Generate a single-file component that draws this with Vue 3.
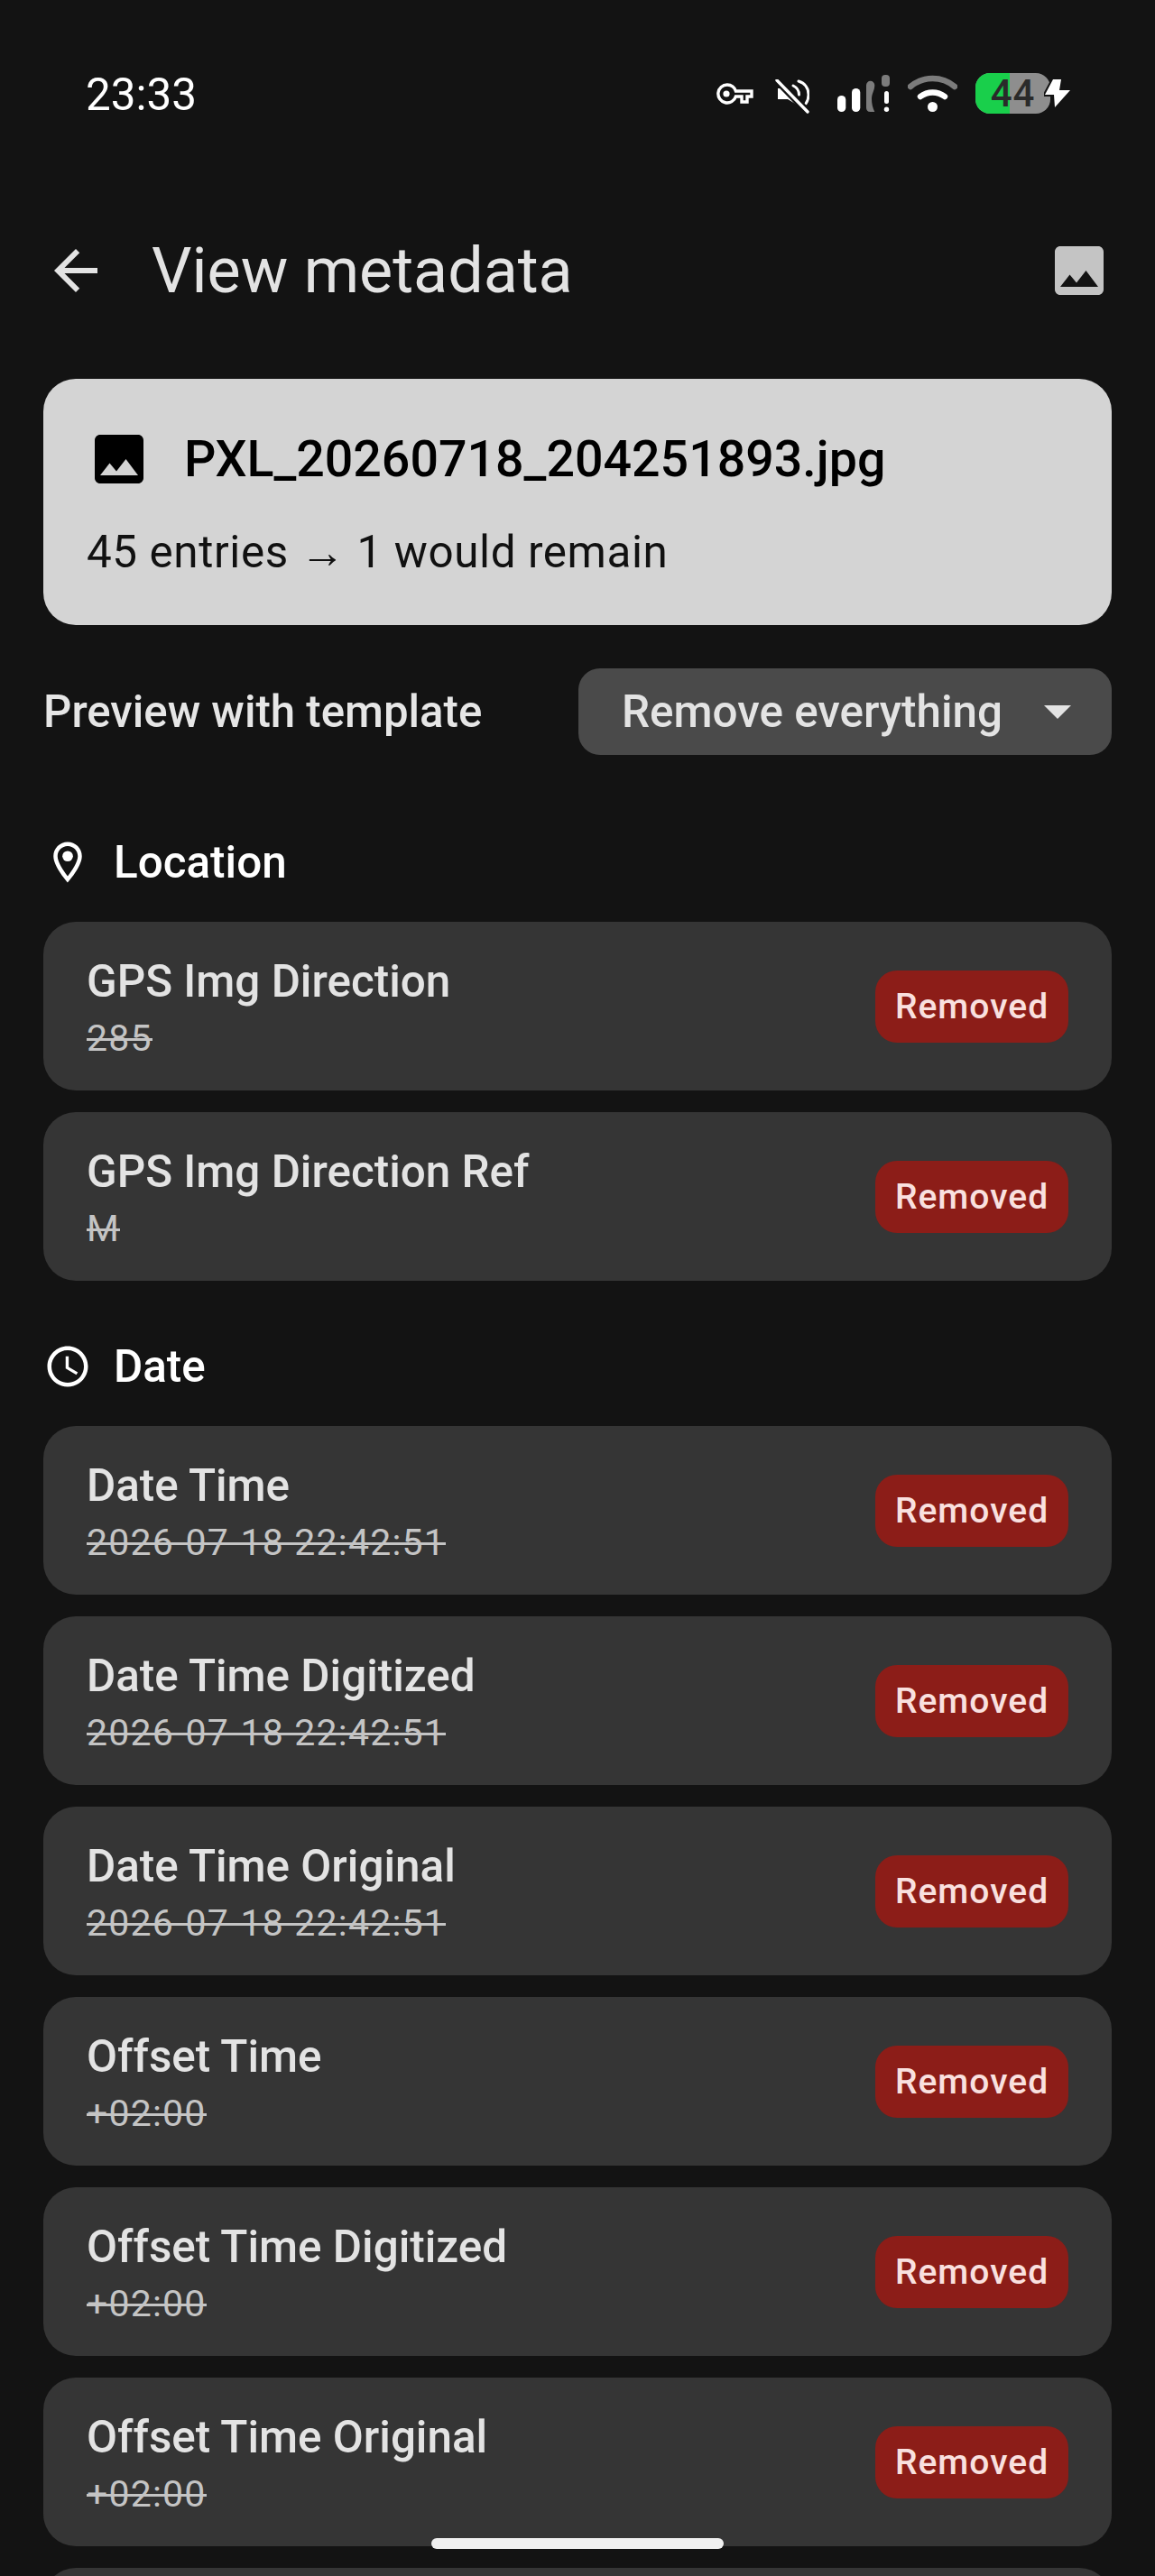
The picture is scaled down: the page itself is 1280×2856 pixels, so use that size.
<script setup>
const sections = [
  { title: 'Location', icon: 'pin', rows: [
    ['GPS Img Direction', '285'],
    ['GPS Img Direction Ref', 'M'],
  ] },
  { title: 'Date', icon: 'clock', rows: [
    ['Date Time', '2026-07-18 22:42:51'],
    ['Date Time Digitized', '2026-07-18 22:42:51'],
    ['Date Time Original', '2026-07-18 22:42:51'],
    ['Offset Time', '+02:00'],
    ['Offset Time Digitized', '+02:00'],
    ['Offset Time Original', '+02:00'],
  ] },
]
const imagePath = 'M21 19V5c0-1.1-.9-2-2-2H5c-1.1 0-2 .9-2 2v14c0 1.1.9 2 2 2h14c1.1 0 2-.9 2-2zM8.5 13.5l2.5 3.01L14.5 12l4.5 6H5l3.5-4.5z'
</script>

<template>
  <div class="page">
    <div class="status">
      <span class="time">23:33</span>
      <div class="status-icons">
        <svg class="i-key" width="41" height="24" viewBox="0 0 41 24"><path d="M12 2a10 10 0 1 0 9.400 13H28v6h6v-6h5V9H21.400A10 10 0 0 0 12 2z" fill="none" stroke="#fff" stroke-width="3.400"/><circle cx="11" cy="12" r="3.600" fill="#fff"/></svg>
        <svg class="i-mute" width="38" height="38" viewBox="0 0 38 38"><path d="M3 10h6l3-2 14 15v5l-2 0-10-6H3z" fill="#fff"/><path d="M26 2c7 2 11 8 11 15 0 4-1 7-3 10" fill="none" stroke="#fff" stroke-width="3" stroke-linecap="round"/><path d="M20 7c4 2 6.500 5.500 6.500 10" fill="none" stroke="#fff" stroke-width="3" stroke-linecap="round"/><path d="M2 1l34 35" stroke="#131313" stroke-width="8"/><path d="M2 1l34 35" stroke="#fff" stroke-width="3.400" stroke-linecap="round"/></svg>
        <svg class="i-signal" width="58" height="41" viewBox="0 0 58 41"><rect x="0" y="23" width="9.300" height="18" rx="4.600" fill="#fff"/><rect x="16" y="15" width="9.300" height="26" rx="4.600" fill="#fff"/><path d="M32 11.500a4.600 4.600 0 0 1 9.300 0c0 6-3.300 9-3.300 15 0 5 1 10 3.300 14.500H36.500c-3 0-4.500-2-4.500-4.600z" fill="#7c7c7c"/><rect x="49" y="0" width="9" height="13" rx="4" fill="#7c7c7c"/><rect x="52" y="18" width="5" height="14" rx="2.500" fill="#fff"/><circle cx="54.500" cy="38.300" r="2.700" fill="#fff"/></svg>
        <svg class="i-wifi" width="55" height="41" viewBox="0 0 55 41"><path d="M3 13C17 1 38 1 52 13" fill="none" stroke="#7c7c7c" stroke-width="6.500" stroke-linecap="round"/><path d="M14 24c8-6 19-6 27 0" fill="none" stroke="#fff" stroke-width="6.500" stroke-linecap="round"/><circle cx="27.500" cy="35.500" r="5.500" fill="#fff"/></svg>
        <div class="battery">
          <div class="bat-pill">
            <span class="bat-fill"></span>
            <span class="bat-num">44</span>
          </div>
          <svg class="i-bolt" width="30" height="33" viewBox="0 0 30 33"><path d="M10 1 1 18h10l1 14 17-19H17l2-12z" fill="#fff" stroke="#131313" stroke-width="4" paint-order="stroke"/></svg>
        </div>
      </div>
    </div>

    <header class="topbar">
      <svg class="icon72" viewBox="0 0 24 24"><path fill="#e3e3e3" d="M20 11H7.830l5.590-5.590L12 4l-8 8 8 8 1.410-1.410L7.830 13H20v-2z"/></svg>
      <h1 class="title">View metadata</h1>
      <svg class="icon72" viewBox="0 0 24 24"><path fill="#c4c4c4" :d="imagePath"/></svg>
    </header>

    <section class="summary">
      <div class="summary-head">
        <svg class="icon72" viewBox="0 0 24 24"><path fill="#000" :d="imagePath"/></svg>
        <span class="file">PXL_20260718_204251893.jpg</span>
      </div>
      <p class="counts">45 entries → 1 would remain</p>
    </section>

    <div class="preview">
      <span class="preview-label">Preview with template</span>
      <div class="select">
        <span>Remove everything</span>
        <span class="caret"></span>
      </div>
    </div>

    <section v-for="s in sections" :key="s.title" class="group">
      <div class="group-head">
        <svg v-if="s.icon === 'pin'" class="icon54" viewBox="0 0 24 24"><path fill="#fff" d="M12 2C8.130 2 5 5.130 5 9c0 5.250 7 13 7 13s7-7.750 7-13c0-3.870-3.130-7-7-7zM7 9c0-2.760 2.240-5 5-5s5 2.240 5 5c0 2.880-2.880 7.190-5 9.880C9.920 16.210 7 11.850 7 9z"/><circle fill="#fff" cx="12" cy="9" r="2.600"/></svg>
        <svg v-else class="icon54" viewBox="0 0 24 24"><path fill="#fff" d="M11.990 2C6.470 2 2 6.480 2 12s4.470 10 9.990 10C17.520 22 22 17.520 22 12S17.520 2 11.990 2zM12 20c-4.420 0-8-3.580-8-8s3.580-8 8-8 8 3.580 8 8-3.580 8-8 8z"/><path fill="#fff" d="M12.500 7H11v6l5.250 3.150.75-1.230-4.500-2.670z"/></svg>
        <span class="group-title">{{ s.title }}</span>
      </div>
      <div class="rows">
        <div v-for="r in s.rows" :key="r[0]" class="row">
          <div class="row-text">
            <span class="name">{{ r[0] }}</span>
            <span class="value">{{ r[1] }}</span>
          </div>
          <span class="badge">Removed</span>
        </div>
        <div v-if="s.icon === 'clock'" class="row"></div>
      </div>
    </section>

    <div class="home-bar"></div>
  </div>
</template>

<style>
html, body { margin: 0; background: #131313; }
</style>

<style scoped>
.page {
  position: relative;
  width: 1280px;
  height: 2856px;
  overflow: hidden;
  background: #131313;
  font-family: Roboto, "Liberation Sans", sans-serif;
  box-sizing: border-box;
}
.status {
  height: 264px;
  box-sizing: border-box;
  padding: 80px 93px 0 95px;
  display: flex;
  justify-content: space-between;
  align-items: flex-start;
}
.time { font-size: 49.4px; line-height: 50px; color: #fff; }
.status-icons { display: flex; align-items: flex-start; }
.i-key { margin-top: 12px; }
.i-mute { margin: 8px 0 0 24px; }
.i-signal { margin: 3px 0 0 31px; }
.i-wifi { margin: 3px 0 0 20px; }
.battery { display: flex; align-items: center; margin: 1px 0 0 20px; }
.bat-pill {
  position: relative;
  width: 83px;
  height: 45px;
  border-radius: 16px;
  background: #8e8e8e;
  display: flex;
  align-items: center;
  justify-content: center;
}
.bat-fill { position: absolute; left: 0; top: 0; bottom: 0; width: 38px; border-radius: 16px 0 0 16px; background: #19cf4b; }
.bat-num { position: relative; font-size: 42px; line-height: 45px; font-weight: 500; color: #2a2a2a; letter-spacing: 1px; }
.i-bolt { margin-left: -7px; position: relative; }
.topbar {
  height: 132px;
  box-sizing: border-box;
  padding: 0 48px;
  display: flex;
  align-items: flex-start;
}
.icon72 { width: 72px; height: 72px; flex: none; display: block; }
.icon54 { width: 54px; height: 54px; flex: none; display: block; }
.title {
  flex: 1;
  margin: 0 0 0 48px;
  font-size: 70px;
  line-height: 72px;
  font-weight: 400;
  color: #e3e3e3;
}
.summary {
  margin: 24px 48px 0;
  height: 273px;
  box-sizing: border-box;
  padding: 53px 48px 0;
  background: #d4d4d4;
  border-radius: 36px;
  color: #000;
}
.summary-head { display: flex; align-items: center; gap: 36px; height: 72px; }
.file { font-size: 55.5px; line-height: 72px; font-weight: 500; margin-top: 2px; }
.counts { margin: 37px 0 0; font-size: 49.4px; line-height: 60px; letter-spacing: 0.6px; color: #111; }
.preview {
  margin: 48px 48px 71px;
  display: flex;
  justify-content: space-between;
  align-items: center;
  height: 96px;
}
.preview-label { font-size: 49.2px; font-weight: 500; color: #e6e6e6; }
.select {
  width: 591px;
  height: 96px;
  box-sizing: border-box;
  padding: 0 45px 0 48px;
  background: #4a4a4a;
  border-radius: 24px;
  display: flex;
  align-items: center;
  justify-content: space-between;
  font-size: 49.4px;
  font-weight: 500;
  color: #e3e3e3;
}
.caret {
  width: 0;
  height: 0;
  border-left: 15px solid transparent;
  border-right: 15px solid transparent;
  border-top: 15px solid #e3e3e3;
}
.group { margin: 47px 48px 0; }
.group-head {
  display: flex;
  align-items: center;
  gap: 24px;
  height: 96px;
  margin-bottom: 18px;
}
.group-title { font-size: 49.4px; font-weight: 500; color: #fff; }
.rows { display: flex; flex-direction: column; gap: 24px; }
.row {
  height: 187px;
  flex: none;
  box-sizing: border-box;
  padding: 4px 48px 0;
  background: #353535;
  border-radius: 36px;
  display: flex;
  align-items: center;
  justify-content: space-between;
}
.row-text { display: flex; flex-direction: column; }
.name { font-size: 49.4px; line-height: 60px; font-weight: 500; color: #e3e3e3; }
.value {
  align-self: flex-start;
  margin-top: 7px;
  font-size: 41px;
  line-height: 52px;
  color: #c4c4c4;
  letter-spacing: 1.2px;
  background: linear-gradient(#c4c4c4, #c4c4c4) 0 26px / 100% 3px no-repeat;
}
.badge {
  width: 214px;
  height: 80px;
  margin-top: -4px;
  border-radius: 24px;
  background: #8c1d18;
  color: #f9e0df;
  display: flex;
  align-items: center;
  justify-content: center;
  font-size: 39px;
  font-weight: 500;
  letter-spacing: 1px;
}
.home-bar {
  position: absolute;
  left: 478px;
  top: 2814px;
  width: 324px;
  height: 12px;
  border-radius: 6px;
  background: #f0f0f0;
}
</style>
